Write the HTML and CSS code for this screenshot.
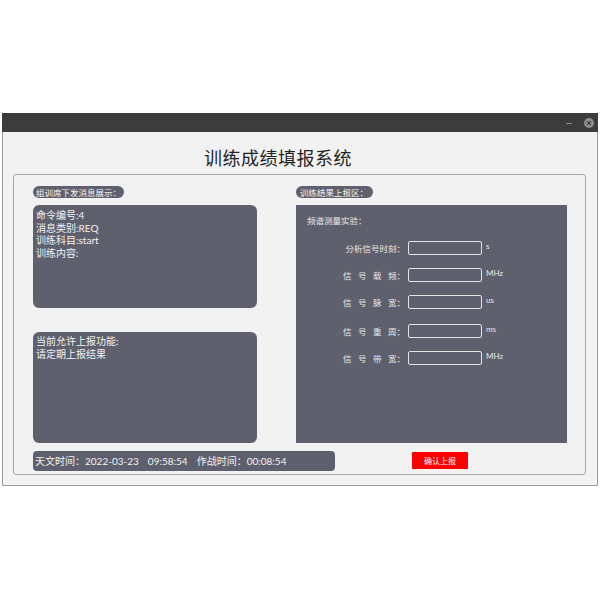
FILE: index.html
```html
<!DOCTYPE html>
<html lang="zh-CN">
<head>
<meta charset="utf-8">
<title>训练成绩填报系统</title>
<link rel="stylesheet" href="styles.css">
</head>
<body>
<div class="window">
  <div class="titlebar">
    <span class="min-btn"></span>
    <span class="close-btn">
      <svg width="10" height="10" viewBox="0 0 10 10"><circle cx="5" cy="5" r="5" fill="#8e8e8e"/><path d="M3.2 3.2 L6.8 6.8 M6.8 3.2 L3.2 6.8" stroke="#3c3c3c" stroke-width="1.2"/></svg>
    </span>
  </div>
  <div class="content">
    <div class="title">训练成绩填报系统</div>
    <div class="group">
      <div class="columns">
        <div class="col-left">
          <div class="pill">组训席下发消息展示：</div>
          <div class="box box-msg">
            <div>命令编号:4</div>
            <div>消息类别:REQ</div>
            <div>训练科目:start</div>
            <div>训练内容:</div>
          </div>
          <div class="box box-func">
            <div>当前允许上报功能:</div>
            <div>请定期上报结果</div>
          </div>
        </div>
        <div class="col-right">
          <div class="pill">训练结果上报区：</div>
          <div class="panel">
            <div class="panel-head">频谱测量实验：</div>
            <div class="row">
              <div class="label">分析信号时刻：</div>
              <div class="input"></div>
              <div class="unit">s</div>
            </div>
            <div class="row">
              <div class="label spread"><span>信</span><span>号</span><span>载</span><span>频：</span></div>
              <div class="input"></div>
              <div class="unit">MHz</div>
            </div>
            <div class="row">
              <div class="label spread"><span>信</span><span>号</span><span>脉</span><span>宽：</span></div>
              <div class="input"></div>
              <div class="unit">us</div>
            </div>
            <div class="row row-gap">
              <div class="label spread"><span>信</span><span>号</span><span>重</span><span>周：</span></div>
              <div class="input"></div>
              <div class="unit">ms</div>
            </div>
            <div class="row">
              <div class="label spread"><span>信</span><span>号</span><span>带</span><span>宽：</span></div>
              <div class="input"></div>
              <div class="unit">MHz</div>
            </div>
          </div>
        </div>
      </div>
      <div class="bottom">
        <div class="timebar">
          <span>天文时间：</span><span>2022-03-23</span><span class="t-time">09:58:54</span><span class="t-label">作战时间：</span><span>00:08:54</span>
        </div>
        <div class="submit">确认上报</div>
      </div>
    </div>
  </div>
</div>
</body>
</html>
```
FILE: styles.css
```css
html, body {
  margin: 0;
  padding: 0;
  background: #ffffff;
}
body {
  font-family: Lato, "Noto Sans CJK SC", sans-serif;
}
.window {
  margin: 113px 0 0 2px;
  width: 596px;
}
.titlebar {
  height: 19px;
  background: #3c3c3c;
  display: flex;
  align-items: center;
  justify-content: flex-end;
  padding-right: 4px;
}
.min-btn {
  width: 6px;
  height: 1px;
  background: #8a8a8a;
  margin-right: 12px;
  margin-top: 2px;
}
.close-btn {
  display: flex;
  width: 10px;
  height: 10px;
}
.content {
  height: 354px;
  box-sizing: border-box;
  background: #f2f2f2;
  border: 1px solid #9c9c9c;
  border-top: none;
}
.title {
  height: 42px;
  box-sizing: border-box;
  padding: 8px 0 0 201px;
  font-family: "Noto Sans CJK SC", sans-serif;
  font-size: 18px;
  line-height: 34px;
  letter-spacing: 0.5px;
  color: #222222;
}
.group {
  margin-left: 10px;
  width: 573px;
  height: 301px;
  box-sizing: border-box;
  border: 1px solid #a6a6a6;
  border-radius: 3px;
  padding: 11px 0 3px 19px;
}
.columns {
  display: flex;
  gap: 39px;
}
.col-left {
  width: 224px;
  display: flex;
  flex-direction: column;
}
.col-right {
  width: 271px;
  display: flex;
  flex-direction: column;
}
.pill {
  align-self: flex-start;
  height: 12px;
  line-height: 12px;
  padding: 0 3px;
  border-radius: 6px;
  background: #5f606e;
  color: #f4f4f4;
  font-size: 8.5px;
  margin-bottom: 7px;
  font-family: "Noto Sans CJK SC", sans-serif;
}
.col-right .pill {
  padding: 0 5px 0 4px;
}
.box {
  background: #5f606e;
  border-radius: 6px;
  color: #f2f2f2;
  font-size: 10px;
  line-height: 12.5px;
  padding: 4px 3px;
  box-sizing: border-box;
}
.box-msg {
  height: 103px;
}
.box-func {
  height: 111px;
  margin-top: 24px;
  padding-top: 3px;
}
.panel {
  height: 238px;
  background: #5f606e;
  color: #e8e8e8;
  box-sizing: border-box;
  padding: 9px 0 0 11px;
  font-family: "Noto Sans CJK SC", sans-serif;
  font-size: 8.5px;
}
.panel-head {
  height: 12px;
  line-height: 12px;
}
.row {
  display: flex;
  align-items: center;
  height: 14px;
  margin-top: 13px;
  padding-left: 36px;
}
.panel-head + .row {
  margin-top: 15px;
}
.row-gap {
  margin-top: 15px;
}
.label {
  width: 62px;
  text-align: right;
  white-space: nowrap;
}
.label.spread {
  display: flex;
  justify-content: space-between;
}
.input {
  width: 74px;
  height: 14px;
  box-sizing: border-box;
  border: 1.5px solid #e4e4e4;
  border-radius: 2px;
  margin-left: 3px;
}
.unit {
  margin-left: 4px;
  font-family: Lato, "Noto Sans CJK SC", sans-serif;
  font-size: 8px;
  margin-top: -4px;
}
.bottom {
  display: flex;
  align-items: flex-start;
  margin-top: 8px;
}
.timebar {
  width: 302px;
  height: 20px;
  box-sizing: border-box;
  background: #5f606e;
  border-radius: 4px;
  color: #f2f2f2;
  font-size: 10px;
  line-height: 20px;
  padding-left: 2px;
  white-space: nowrap;
}
.t-time {
  margin-left: 9px;
}
.t-label {
  margin-left: 9px;
}
.submit {
  margin-left: 77px;
  margin-top: 1px;
  width: 56px;
  height: 17px;
  line-height: 17px;
  background: #ff0000;
  color: #ffffff;
  font-size: 8px;
  text-align: center;
  border-radius: 1px;
  font-family: "Noto Sans CJK SC", sans-serif;
}
```
